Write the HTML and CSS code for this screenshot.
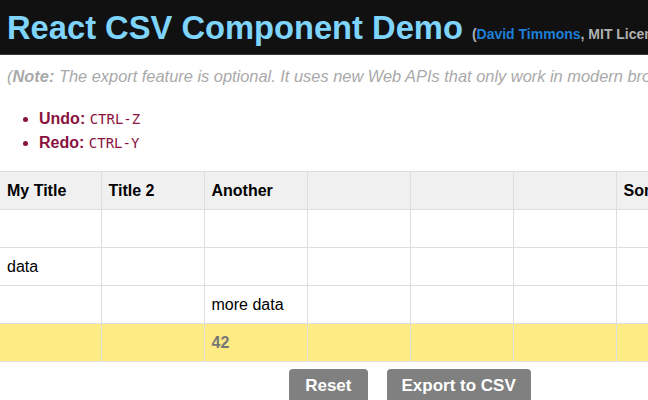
FILE: index.html
```html
<!DOCTYPE html>
<html>
<head>
<meta charset="utf-8">
<link rel="stylesheet" href="styles.css">
</head>
<body>
<header class="top">
  <h1 class="title">React CSV Component Demo</h1>
  <span class="credit">(<a class="author">David Timmons</a>, MIT License)</span>
</header>
<p class="note">(<b>Note:</b> The export feature is optional. It uses new Web APIs that only work in modern browsers.)</p>
<ul class="keys">
  <li><b>Undo:</b> <code>CTRL-Z</code></li>
  <li><b>Redo:</b> <code>CTRL-Y</code></li>
</ul>
<div class="wrap">
<table class="grid">
  <colgroup>
    <col class="c1"><col class="cn"><col class="cn"><col class="cn"><col class="cn"><col class="cn"><col class="cn">
  </colgroup>
  <thead>
    <tr><th>My Title</th><th>Title 2</th><th>Another</th><th></th><th></th><th></th><th>Something</th></tr>
  </thead>
  <tbody>
    <tr><td></td><td></td><td></td><td></td><td></td><td></td><td></td></tr>
    <tr><td>data</td><td></td><td></td><td></td><td></td><td></td><td></td></tr>
    <tr><td></td><td></td><td>more data</td><td></td><td></td><td></td><td></td></tr>
    <tr class="total"><td></td><td></td><td>42</td><td></td><td></td><td></td><td></td></tr>
  </tbody>
</table>
</div>
<div class="actions">
  <button class="btn btn-reset">Reset</button>
  <button class="btn">Export to CSV</button>
</div>
</body>
</html>
```
FILE: styles.css
```css
html, body {
  margin: 0;
  padding: 0;
  background: #fff;
  width: 648px;
  height: 400px;
  overflow: hidden;
  font-family: "Liberation Sans", Arial, sans-serif;
}
.top {
  background: #111;
  height: 54px;
  border-bottom: 1px solid #3a3a3a;
  display: flex;
  align-items: baseline;
  padding-left: 7px;
  white-space: nowrap;
  overflow: hidden;
}
.title {
  margin: 0;
  font-size: 32.7px;
  line-height: 56px;
  font-weight: bold;
  color: #7fd4fb;
}
.credit {
  margin-left: 9px;
  font-size: 14px;
  font-weight: bold;
  color: #b0b0b0;
}
.author {
  color: #1e7fd8;
}
.note {
  margin: 0;
  padding: 11px 0 0 7px;
  font-size: 16.4px;
  font-style: italic;
  color: #a9a9a9;
  white-space: nowrap;
  overflow: hidden;
  line-height: 20px;
}
.note b { font-weight: bold; }
.keys {
  margin: 21px 0 0 0;
  padding-left: 39px;
  color: #8a1240;
  font-size: 16px;
  line-height: 24px;
}
.keys code {
  font-family: "DejaVu Sans Mono", monospace;
  font-size: 14px;
  color: #8a1240;
}
.wrap {
  margin-top: 16px;
  width: 648px;
  overflow: hidden;
}
.grid {
  border-collapse: collapse;
  table-layout: fixed;
  width: 719px;
  font-size: 16px;
}
.c1 { width: 101px; }
.cn { width: 103px; }
.grid th, .grid td {
  height: 37px;
  border: 1px solid #dedede;
  padding: 0 7px;
  text-align: left;
  color: #000;
  white-space: nowrap;
  overflow: hidden;
}
.grid th:first-child, .grid td:first-child {
  border-left: none;
}
.grid th {
  background: #f0f0f0;
  font-weight: bold;
}
.grid .total td {
  background: #ffeb84;
  color: #777;
  font-weight: bold;
}
.actions {
  display: flex;
  justify-content: center;
  gap: 19px;
  padding-top: 7px;
  padding-left: 172px;
}
.btn {
  background: #808080;
  color: #fff;
  border: none;
  border-radius: 4px;
  font-family: "Liberation Sans", Arial, sans-serif;
  font-weight: bold;
  font-size: 17px;
  height: 40px;
  padding: 0 15px 6px;
}
.btn-reset {
  padding: 0 16px 6px;
}
```
